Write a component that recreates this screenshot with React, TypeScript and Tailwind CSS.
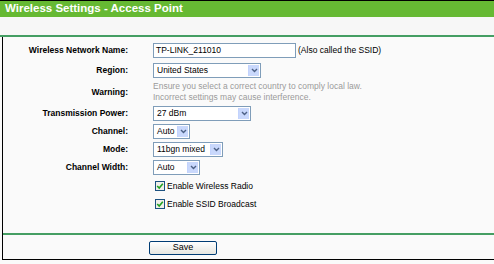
import React from "react"

const FONT = "font-['Liberation_Sans',Arial,sans-serif]"

function Arrow() {
  return (
    <div className="flex h-full w-[11px] items-center justify-center border-l border-[#c3d3fd] bg-[#c9d8fc]">
      <svg width="7" height="5" viewBox="0 0 7 5">
        <path d="M1 1 L3.5 3.5 L6 1" fill="none" stroke="#4d6185" strokeWidth="1.4" />
      </svg>
    </div>
  )
}

function Select({ value, width }: { value: string; width: string }) {
  return (
    <div className={`flex h-[15px] items-stretch border border-[#7f9db9] bg-white p-[1px] ${width}`}>
      <div className="flex flex-1 items-center pl-[2px] text-[8.5px] text-black">{value}</div>
      <Arrow />
    </div>
  )
}

function Check({ label }: { label: string }) {
  return (
    <div className="flex h-[12px] items-center">
      <div className="ml-[2px] flex h-[10px] w-[10px] items-center justify-center border border-[#1c5180] bg-[#f0f0ea]">
        <svg width="8" height="8" viewBox="0 0 8 8">
          <path d="M1.2 4 L3.2 6 L6.8 1.8" fill="none" stroke="#21a121" strokeWidth="1.6" />
        </svg>
      </div>
      <span className="ml-[2px] text-[8.5px] text-black">{label}</span>
    </div>
  )
}

function Row({ label, children, className = "" }: { label: string; children: React.ReactNode; className?: string }) {
  return (
    <div className={`flex items-center ${className}`}>
      <div className="w-[125px] text-right text-[8.5px] font-bold text-black">{label}</div>
      <div className="ml-[25px] flex items-center">{children}</div>
    </div>
  )
}

export default function App() {
  return (
    <div className={`h-[264px] w-[494px] overflow-hidden bg-[#fafafa] ${FONT}`}>
      {/* Title bar */}
      <div className="flex h-[17px] items-center border-t border-black bg-[#66b933] pl-[5px] text-[11.5px] font-bold text-white">
        Wireless Settings - Access Point
      </div>
      <div className="h-[18px] bg-[#f7f7f7]" />
      <div className="h-[2px] bg-[#459e63]" />

      {/* Form */}
      <div className="ml-[2px] flex h-[223px] flex-col border-b border-l border-black pt-[6px]">
        <Row label="Wireless Network Name:">
          <div className="flex h-[15px] w-[143px] items-center border border-[#7f9db9] bg-white pl-[2px] text-[8.5px] text-black">
            TP-LINK_211010
          </div>
          <span className="ml-[2px] text-[8.5px] text-black">(Also called the SSID)</span>
        </Row>
        <Row label="Region:" className="mt-[5px]">
          <Select value="United States" width="w-[108px]" />
        </Row>
        <Row label="Warning:" className="mt-[3px]">
          <div className="text-[8.5px] leading-[11px] text-[#9a9a9a]">
            <div>Ensure you select a correct country to comply local law.</div>
            <div>Incorrect settings may cause interference.</div>
          </div>
        </Row>
        <Row label="Transmission Power:" className="mt-[3px]">
          <Select value="27 dBm" width="w-[98px]" />
        </Row>
        <Row label="Channel:" className="mt-[3px]">
          <Select value="Auto" width="w-[37px]" />
        </Row>
        <Row label="Mode:" className="mt-[3px]">
          <Select value="11bgn mixed" width="w-[70px]" />
        </Row>
        <Row label="Channel Width:" className="mt-[3px]">
          <Select value="Auto" width="w-[47px]" />
        </Row>
        <Row label="" className="mt-[5px]">
          <Check label="Enable Wireless Radio" />
        </Row>
        <Row label="" className="mt-[6px]">
          <Check label="Enable SSID Broadcast" />
        </Row>

        <div className="mt-[23px] h-[2px] bg-[#459e63]" />

        <div className="mt-[6px] pl-[146px]">
          <button className="flex h-[14px] w-[68px] items-center justify-center rounded-[2px] border border-[#003c74] bg-gradient-to-b from-white to-[#e6e6e0] text-[9px] text-black">
            Save
          </button>
        </div>
      </div>
    </div>
  )
}
